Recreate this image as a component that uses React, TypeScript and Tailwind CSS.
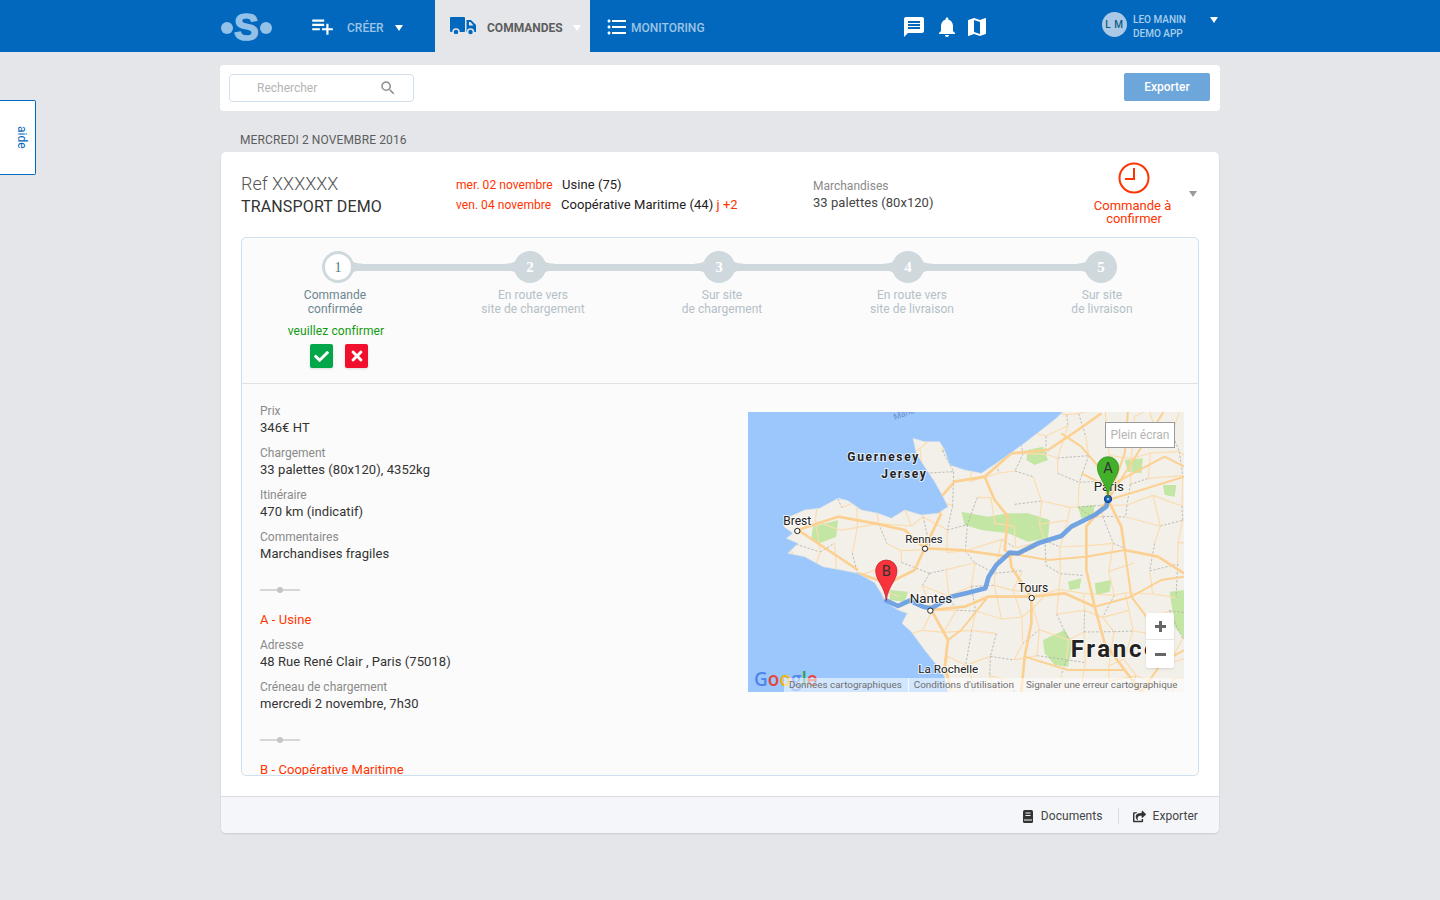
import React from "react";
import { MdPlaylistAdd, MdFormatListBulleted, MdMessage, MdNotifications, MdMap, MdSearch } from "react-icons/md";
import { FaCheck, FaTimes, FaShareSquare } from "react-icons/fa";

const steps = [
    { n: 1, lines: ["Commande", "confirmée"] },
    { n: 2, lines: ["En route vers", "site de chargement"] },
    { n: 3, lines: ["Sur site", "de chargement"] },
    { n: 4, lines: ["En route vers", "site de livraison"] },
    { n: 5, lines: ["Sur site", "de livraison"] },
];

const land =
    "M950 0 L925 25 L880 60 L835 95 L790 128 L745 160 L700 190 L650 180 L605 165 L590 120 L575 95 L530 95 L495 85 L505 130 L530 170 L560 215 L585 260 L600 290 L570 310 L520 315 L470 300 L430 325 L390 310 L340 300 L300 272 L270 265 L215 295 L170 300 L115 325 L108 350 L135 370 L115 385 L150 400 L120 430 L170 440 L225 470 L280 480 L330 490 L380 518 L400 550 L412 575 L450 600 L478 610 L462 640 L490 665 L530 720 L570 770 L590 800 L600 846 L1310 846 L1310 0 Z";

const greens = [
    "M640 305 L720 320 L780 310 L840 310 L905 330 L900 385 L840 395 L780 370 L700 360 L650 345 Z",
    "M195 350 L270 330 L265 380 L215 400 L190 385 Z",
    "M840 120 L885 110 L900 150 L860 165 L835 150 Z",
    "M885 690 L950 660 L975 700 L960 770 L920 765 L890 730 Z",
    "M1265 545 L1308 540 L1308 685 L1280 650 Z",
    "M1130 150 L1185 145 L1180 190 L1140 185 Z",
    "M990 290 L1040 285 L1035 320 L1000 325 Z",
    "M425 540 L480 545 L470 575 L425 570 Z",
    "M1040 520 L1090 510 L1085 545 L1045 555 Z",
    "M1245 225 L1285 225 L1280 260 L1250 255 Z",
    "M960 515 L1000 505 L995 535 L965 540 Z",
];

const majorRoads = [
    "M575 310 L580 260 L620 215 L710 200 L790 130 L900 120 L990 60 L1060 10",
    "M710 200 L740 270 L780 320 L770 420 L785 430",
    "M580 310 L530 415 L640 420 L780 440 L860 410",
    "M530 415 L500 480 L420 520 L330 490",
    "M530 415 L470 360 L380 340 L270 320 L150 360",
    "M150 360 L240 420 L330 480",
    "M550 600 L600 690 L590 770 L610 840",
    "M550 600 L650 590 L720 560 L850 560 L950 550 L1040 590",
    "M850 565 L850 640 L830 740 L820 846",
    "M850 565 L790 470 L785 430",
    "M1080 270 L1015 350 L1015 480 L1040 590 L1070 700 L1130 780 L1180 846",
    "M1080 270 L1120 350 L1130 420 L1230 440 L1308 490",
    "M1080 270 L1180 240 L1308 200",
    "M1080 270 L1060 180 L1000 110 L940 70",
    "M1080 270 L1130 130 L1140 0",
    "M1080 270 L1200 80 L1250 0",
    "M1015 440 L1130 420",
    "M1130 420 L1150 560 L1210 640 L1250 700",
    "M1040 590 L1150 560 L1240 510 L1308 500",
    "M785 430 L900 450 L1015 440",
    "M1000 190 L1080 230 L1250 140 L1308 170",
    "M720 560 L640 660 L600 690",
    "M1180 846 L1240 760 L1308 720",
    "M830 740 L960 780 L1130 780",
];

// fills the land with a fine road mesh, the map has too many roads to list by hand
function buildMesh() {
    let seed = 41;
    const rnd = () => {
        seed = (seed * 16807) % 2147483647;
        return seed / 2147483647;
    };
    const step = 68;
    const pts: number[][][] = [];
    for (let r = 0; r < 14; r++) {
        pts[r] = [];
        for (let c = 0; c < 21; c++) {
            pts[r][c] = [60 + c * step + (rnd() - 0.5) * 44, r * step + (rnd() - 0.5) * 44];
        }
    }
    const thin: string[] = [];
    const dashed: string[] = [];
    for (let r = 0; r < 14; r++) {
        for (let c = 0; c < 21; c++) {
            const p = pts[r][c];
            const next = [c < 20 ? pts[r][c + 1] : null, r < 13 ? pts[r + 1][c] : null];
            next.forEach((q) => {
                if (!q) return;
                const v = rnd();
                const d = `M${p[0].toFixed(0)} ${p[1].toFixed(0)} L${q[0].toFixed(0)} ${q[1].toFixed(0)}`;
                if (v < 0.48) thin.push(d);
                else if (v < 0.72) dashed.push(d);
            });
        }
    }
    return { thin, dashed };
}

const mesh = buildMesh();

const cityDots = [
    [148, 363],
    [531, 416],
    [851, 564],
    [547, 602],
];

function MapPin({ x, y, color, dark, letter }: { x: number; y: number; color: string; dark: string; letter: string }) {
    return (
        <g>
            <path
                d={`M${x} ${y} C${x - 5} ${y - 45} ${x - 32} ${y - 60} ${x - 32} ${y - 90} A32 32 0 1 1 ${x + 32} ${y - 90} C${x + 32} ${y - 60} ${x + 5} ${y - 45} ${x} ${y} Z`}
                fill={color}
                stroke={dark}
                strokeWidth="2"
            />
            <text x={x} y={y - 73} textAnchor="middle" fontSize="44" fill="#333" fontFamily="Roboto, sans-serif">
                {letter}
            </text>
        </g>
    );
}

function MapLabel({ x, y, size, children, bold, spacing }: { x: number; y: number; size: number; children: string; bold?: boolean; spacing?: number }) {
    return (
        <text
            x={x}
            y={y}
            fontSize={size}
            fontFamily="Roboto, sans-serif"
            fontWeight={bold ? 700 : 400}
            letterSpacing={spacing || 0}
            fill="#222"
            stroke="#fff"
            strokeWidth="6"
            strokeOpacity="0.7"
            paintOrder="stroke"
        >
            {children}
        </text>
    );
}

function RouteMap() {
    return (
        <div className="relative w-[436px] h-[280px] overflow-hidden flex-shrink-0 mt-[12px] mr-[14px] bg-[#9cc7fd] tracking-normal">
            <svg viewBox="0 6 1308 840" className="block w-full h-full">
                <defs>
                    <clipPath id="land-clip">
                        <path d={land} />
                    </clipPath>
                </defs>
                <path d={land} fill="#f3f0ea" stroke="#dfe3e0" strokeWidth="2" />
                <g clipPath="url(#land-clip)">
                    {greens.map((d, i) => (
                        <path key={i} d={d} fill="#c3e6a4" />
                    ))}
                    {mesh.dashed.map((d, i) => (
                        <path key={i} d={d} fill="none" stroke="#b0b0aa" strokeWidth="2.5" strokeDasharray="7 5" />
                    ))}
                    {mesh.thin.map((d, i) => (
                        <path key={i} d={d} fill="none" stroke="#fbdcae" strokeWidth="3.5" />
                    ))}
                    {majorRoads.map((d, i) => (
                        <path key={i} d={d} fill="none" stroke="#fcd090" strokeWidth={i < 12 ? 8 : 6} strokeLinejoin="round" />
                    ))}
                </g>
                <path
                    d="M1080 268 L1075 290 L1040 315 L1010 330 L970 350 L940 378 L870 400 L810 430 L785 428 L745 465 L722 500 L712 535 L660 548 L610 560 L550 595 L525 590 L485 572 L450 588 L415 572"
                    fill="none"
                    stroke="#5a96e3"
                    strokeOpacity="0.85"
                    strokeWidth="14"
                    strokeLinejoin="round"
                    strokeLinecap="round"
                />
                {cityDots.map(([cx, cy]) => (
                    <circle key={cx} cx={cx} cy={cy} r="8" fill="#fff" stroke="#222" strokeWidth="3" />
                ))}
                <MapLabel x={298} y={153} size={36} bold spacing={5}>Guernesey</MapLabel>
                <MapLabel x={400} y={205} size={36} bold spacing={5}>Jersey</MapLabel>
                <text x={440} y={30} fontSize="26" fill="#6a93c9" fontFamily="Roboto, sans-serif" transform="rotate(-20 440 30)">Manche</text>
                <MapLabel x={106} y={344} size={36}>Brest</MapLabel>
                <MapLabel x={472} y={398} size={34}>Rennes</MapLabel>
                <MapLabel x={810} y={545} size={36}>Tours</MapLabel>
                <MapLabel x={485} y={580} size={40}>Nantes</MapLabel>
                <MapLabel x={511} y={790} size={35}>La Rochelle</MapLabel>
                <MapLabel x={968} y={740} size={72} bold spacing={8}>France</MapLabel>
                <MapLabel x={1037} y={244} size={40}>Paris</MapLabel>
                <circle cx="1080" cy="267" r="11" fill="#1b5fb8" stroke="#0b3f8a" strokeWidth="3" />
                <circle cx="1080" cy="267" r="4" fill="#8cc0f5" />
                <MapPin x={1080} y={262} color="#43b02a" dark="#2e8a1c" letter="A" />
                <MapPin x={415} y={572} color="#f8333c" dark="#b81c24" letter="B" />
            </svg>

            {/* Fullscreen */}
            <div className="absolute left-[357px] top-[10px] w-[70px] h-[26px] bg-white border border-[#9a9a9a] flex items-center justify-center text-[12px] text-[#b5b5b5]">
                Plein écran
            </div>

            {/* Zoom */}
            <div className="absolute left-[398px] top-[201px] w-[28px] h-[55px] bg-white rounded-[2px] flex flex-col items-center text-[#666] shadow-sm">
                <div className="h-[27px] w-full flex items-center justify-center border-b border-[#e6e6e6]">
                    <span className="block relative w-[11px] h-[3px] bg-[#666]">
                        <span className="absolute left-[4px] top-[-4px] w-[3px] h-[11px] bg-[#666]" />
                    </span>
                </div>
                <div className="h-[28px] w-full flex items-center justify-center">
                    <span className="block w-[11px] h-[3px] bg-[#666]" />
                </div>
            </div>

            {/* Google logo */}
            <div className="absolute left-[6px] bottom-[1px] text-[19px] leading-[24px] font-semibold font-['Open_Sans',sans-serif] flex">
                <span className="text-[#4f86ec]">G</span>
                <span className="text-[#e8433a]">o</span>
                <span className="text-[#f5b400]">o</span>
                <span className="text-[#4f86ec]">g</span>
                <span className="text-[#2fa24f]">l</span>
                <span className="text-[#e8433a]">e</span>
            </div>

            {/* Attribution */}
            <div className="absolute left-[36px] right-0 bottom-0 h-[14px] flex items-center bg-white/55 text-[9.9px] text-[#707070] whitespace-nowrap">
                <span className="pl-[5px] pr-[6px] border-r border-white/80">Données cartographiques</span>
                <span className="pl-[5px] pr-[12px]">Conditions d'utilisation</span>
                <span>Signaler une erreur cartographique</span>
            </div>
        </div>
    );
}

function Ornament() {
    return (
        <div className="relative w-[40px] h-[2px] bg-[#d6d6d6] mt-[27px] mb-[21px]">
            <div className="absolute left-[17px] top-[-2px] w-[6px] h-[6px] rounded-full bg-[#c4c4c4]" />
        </div>
    );
}

function Info({ label, value }: { label: string; value: string }) {
    return (
        <div className="mb-[9px]">
            <p className="text-[12px] leading-[17px] text-[#8a8a8a]">{label}</p>
            <p className="text-[13px] leading-[16px] tracking-[0.06px] text-[#333]">{value}</p>
        </div>
    );
}

function TruckIcon() {
    return (
        <svg viewBox="0 0 26 18" className="w-[26px] h-[18px] text-[#0268bd]">
            <rect x="0" y="0" width="15" height="15" rx="1" fill="currentColor" />
            <path d="M16.5 3 H21 L26 8 V15 H16.5 Z" fill="currentColor" />
            <path d="M19 5 H20.5 L23.5 8.5 H19 Z" fill="#e4e6ea" />
            <circle cx="6" cy="15" r="3" fill="#0268bd" stroke="#e4e6ea" strokeWidth="1.5" />
            <circle cx="20.5" cy="15" r="3" fill="#0268bd" stroke="#e4e6ea" strokeWidth="1.5" />
        </svg>
    );
}

function DocIcon() {
    return (
        <svg viewBox="0 0 10 13" className="w-[10px] h-[13px]">
            <rect width="10" height="13" rx="1.5" fill="#333" />
            <path d="M2.5 3 H7.5 M2.5 5.5 H7.5 M1 10 H9" stroke="#f5f6fa" strokeWidth="1" />
        </svg>
    );
}

function StepNode({ n, index }: { n: number; index: number }) {
    return (
        <div className="relative w-[32px] h-[32px] flex-shrink-0">
            {/* soft joints where the bar meets the circle */}
            <svg viewBox="0 0 48 32" className="absolute left-[-8px] top-0 w-[48px] h-[32px]">
                {index > 0 && <path d="M0 12.5 C8 12.5 11 10 14 5 L24 5 L24 27 L14 27 C11 22 8 19.5 0 19.5 Z" fill="#cfd8dc" />}
                {index < 4 && <path d="M48 12.5 C40 12.5 37 10 34 5 L24 5 L24 27 L34 27 C37 22 40 19.5 48 19.5 Z" fill="#cfd8dc" />}
            </svg>
            {index === 0 ? (
                <div className="absolute inset-0 rounded-full border-[3px] border-[#cfd8dc] bg-white flex items-center justify-center text-[14px] font-['Liberation_Serif',serif] text-[#4f7a86]">
                    {n}
                </div>
            ) : (
                <div className="absolute inset-0 rounded-full bg-[#cfd8dc] flex items-center justify-center text-[15px] font-bold font-['Liberation_Serif',serif] text-white">
                    {n}
                </div>
            )}
        </div>
    );
}

export default function App() {
    return (
        <div className="relative min-h-[900px] bg-[#e4e6ea] font-['Roboto',sans-serif] overflow-hidden">
            {/* Top bar */}
            <header className="h-[52px] bg-[#0268bd] flex pl-[220px]">
                <div className="w-[91px] flex items-center pl-[1px]">
                    <span className="w-[12px] h-[12px] rounded-full bg-[#93c1e8] mt-[4px]" />
                    <span className="text-[37px] leading-[52px] font-black text-[#93c1e8] ml-[1px] mt-[4px] font-['Liberation_Sans',sans-serif] [-webkit-text-stroke:1.5px_#93c1e8]">S</span>
                    <span className="w-[12px] h-[12px] rounded-full bg-[#93c1e8] mt-[4px] ml-[1px]" />
                </div>
                <div className="w-[124px] flex items-center text-white">
                    <MdPlaylistAdd className="w-[26px] h-[26px] -ml-[2px]" />
                    <span className="ml-[12px] mt-[4px] text-[12px] font-medium text-[#9cc4e6]">CRÉER</span>
                    <span className="ml-[11px] mt-[4px] border-x-[4.5px] border-x-transparent border-t-[6px] border-t-white" />
                </div>
                <div className="w-[155px] bg-[#e4e6ea] flex items-center pl-[15px]">
                    <TruckIcon />
                    <span className="ml-[11px] mt-[4px] text-[12px] font-bold text-[#5d5d5d]">COMMANDES</span>
                    <span className="ml-[10px] mt-[4px] border-x-[4.5px] border-x-transparent border-t-[6px] border-t-white" />
                </div>
                <div className="w-[312px] flex items-center pl-[15px] text-white">
                    <MdFormatListBulleted className="w-[24px] h-[24px] mt-[1px]" />
                    <span className="ml-[2px] mt-[4px] text-[12px] font-medium text-[#9cc4e6]">MONITORING</span>
                </div>
                <div className="w-[200px] flex items-center text-white pt-[1px]">
                    <MdMessage className="w-[24px] h-[24px]" />
                    <MdNotifications className="w-[24px] h-[24px] ml-[9px]" />
                    <MdMap className="w-[24px] h-[24px] ml-[6px]" />
                </div>
                <div className="flex items-center">
                    <div className="w-[25px] h-[25px] rounded-full bg-[#a9c9e6] text-[#0e5f80] text-[10px] font-medium tracking-[0.6px] flex items-center justify-center -mt-[3px]">
                        L M
                    </div>
                    <div className="ml-[6px] w-[77px] text-[10px] font-medium leading-[14px] text-[#a9cdec] mt-[1px]">
                        <p>LEO MANIN</p>
                        <p>DEMO APP</p>
                    </div>
                    <span className="border-x-[4.5px] border-x-transparent border-t-[6px] border-t-white -mt-[12px]" />
                </div>
            </header>

            {/* Help tab */}
            <div className="absolute left-0 top-[100px] w-[36px] h-[75px] bg-white border border-[#0268bd] border-l-0 rounded-r-[2px] flex items-center justify-center pl-[8px] text-[12px] text-[#0268bd] [writing-mode:vertical-rl]">
                aide
            </div>

            <main className="w-[1000px] mx-auto pt-[13px]">
                {/* Search */}
                <div className="h-[46px] bg-white rounded-[4px] flex items-start justify-between pl-[9px] pr-[10px]">
                    <div className="mt-[9px] w-[185px] h-[28px] border border-[#cfe0f0] rounded-[4px] flex items-center pl-[27px] pr-[16px] justify-between">
                        <span className="text-[12px] text-[#b5b5b5]">Rechercher</span>
                        <MdSearch className="w-[18px] h-[18px] text-[#8f8f8f]" />
                    </div>
                    <button className="mt-[8px] w-[86px] h-[28px] bg-[#6ca6da] rounded-[2px] text-[12px] font-medium text-white">Exporter</button>
                </div>

                <p className="mt-[21px] pl-[20px] text-[12px] leading-[16px] tracking-[0.12px] text-[#5d5d5d]">MERCREDI 2 NOVEMBRE 2016</p>

                {/* Order card */}
                <section className="mt-[4px] mx-[1px] h-[681px] bg-white rounded-[5px] shadow-[0_1px_2px_rgba(0,0,0,0.12)] flex flex-col">
                    <div className="h-[85px] flex pl-[20px] pt-[21px]">
                        <div className="w-[215px]">
                            <p className="text-[18px] leading-[22px] font-light text-[#555]">Ref XXXXXX</p>
                            <p className="text-[16px] leading-[22px] mt-[1px] tracking-[0.15px] text-[#333]">TRANSPORT DEMO</p>
                        </div>
                        <div className="w-[357px] pt-[2px] text-[13px] leading-[20px] tracking-[0.05px] text-[#222]">
                            <p className="flex">
                                <span className="w-[106px] text-[12px] text-[#ff3300]">mer. 02 novembre</span>
                                <span>Usine (75)</span>
                            </p>
                            <p className="flex">
                                <span className="w-[105px] text-[12px] text-[#ff3300]">ven. 04 novembre</span>
                                <span>Coopérative Maritime (44) <span className="text-[#ff3300]">j +2</span></span>
                            </p>
                        </div>
                        <div className="w-[260px] pt-[5px]">
                            <p className="text-[12px] leading-[17px] text-[#8a8a8a]">Marchandises</p>
                            <p className="text-[13px] leading-[16px] tracking-[0.05px] text-[#444]">33 palettes (80x120)</p>
                        </div>
                        <div className="w-[119px] -mt-[11px] flex flex-col items-center text-[13px] leading-[13px] text-[#ff3300]">
                            <svg viewBox="0 0 32 32" className="w-[32px] h-[32px] mb-[5px] ml-[2px]">
                                <circle cx="16" cy="16" r="14.5" fill="none" stroke="#ff3300" strokeWidth="2" />
                                <path d="M16 6 V17 H7" fill="none" stroke="#ff3300" strokeWidth="2" />
                            </svg>
                            <p>Commande à</p>
                            <p className="ml-[3px]">confirmer</p>
                        </div>
                        <span className="ml-[-3px] mt-[18px] h-0 border-x-[4.5px] border-x-transparent border-t-[6px] border-t-[#9a9a9a]" />
                    </div>

                    {/* Status panel */}
                    <div className="mx-[20px] h-[539px] bg-[#fbfbfb] border border-[#cfe0f0] rounded-[5px] overflow-hidden flex flex-col">
                        <div className="h-[146px] flex-shrink-0 border-b border-[#e2e2e2]">
                            <div className="pt-[13px] pl-[80px] flex items-center w-[876px]">
                                {steps.map((s, i) => (
                                    <React.Fragment key={s.n}>
                                        {i > 0 && <div className={`h-[7px] bg-[#cfd8dc] ${i === 1 ? "w-[160px]" : i === 4 ? "w-[161px]" : "w-[157px]"}`} />}
                                        <StepNode n={s.n} index={i} />
                                    </React.Fragment>
                                ))}
                            </div>
                            <div className="mt-[5px] grid grid-cols-[186px_210px_168px_212px_168px] text-center text-[12px] leading-[14px] tracking-[0.05px]">
                                {steps.map((s, i) => (
                                    <div key={s.n} className={i === 0 ? "text-[#6c8592]" : "text-[#b4c0c7]"}>
                                        <p>{s.lines[0]}</p>
                                        <p>{s.lines[1]}</p>
                                        {i === 0 && (
                                            <div className="mt-[7px]">
                                                <p className="text-[#129a0e] leading-[16px] tracking-[0.1px] pl-[2px]">veuillez confirmer</p>
                                                <div className="mt-[5px] flex justify-center gap-[12px] pl-[8px]">
                                                    <span className="w-[23px] h-[24px] rounded-[2px] bg-[#04a64a] flex items-center justify-center text-white shadow-sm">
                                                        <FaCheck className="w-[15px] h-[15px]" />
                                                    </span>
                                                    <span className="w-[23px] h-[24px] rounded-[2px] bg-[#f00f2c] flex items-center justify-center text-white shadow-sm">
                                                        <FaTimes className="w-[16px] h-[16px]" />
                                                    </span>
                                                </div>
                                            </div>
                                        )}
                                    </div>
                                ))}
                            </div>
                        </div>

                        <div className="flex-1 min-h-0 overflow-hidden flex justify-between pl-[18px] pt-[19px]">
                            <div>
                                <Info label="Prix" value="346€ HT" />
                                <Info label="Chargement" value="33 palettes (80x120), 4352kg" />
                                <Info label="Itinéraire" value="470 km (indicatif)" />
                                <Info label="Commentaires" value="Marchandises fragiles" />
                                <Ornament />
                                <p className="text-[13px] leading-[16px] tracking-[0.06px] text-[#ff3300] mb-[9px]">A - Usine</p>
                                <Info label="Adresse" value="48 Rue René Clair , Paris (75018)" />
                                <Info label="Créneau de chargement" value="mercredi 2 novembre, 7h30" />
                                <Ornament />
                                <p className="text-[13px] leading-[16px] tracking-[0.06px] text-[#ff3300]">B - Coopérative Maritime</p>
                            </div>
                            <div className="-mt-[3px]">
                                <RouteMap />
                            </div>
                        </div>
                    </div>

                    {/* Footer actions */}
                    <div className="mt-[20px] flex-1 bg-[#f5f6fa] border-t border-[#dcdcdc] rounded-b-[5px] flex items-center justify-end pr-[21px] pt-[2px] text-[12px] tracking-[0.05px] text-[#444]">
                        <DocIcon />
                        <span className="ml-[8px]">Documents</span>
                        <span className="ml-[15px] mr-[14px] w-px h-[16px] bg-[#dcdcdc]" />
                        <FaShareSquare className="w-[13px] h-[13px] text-[#333]" />
                        <span className="ml-[7px]">Exporter</span>
                    </div>
                </section>
            </main>
        </div>
    );
}
